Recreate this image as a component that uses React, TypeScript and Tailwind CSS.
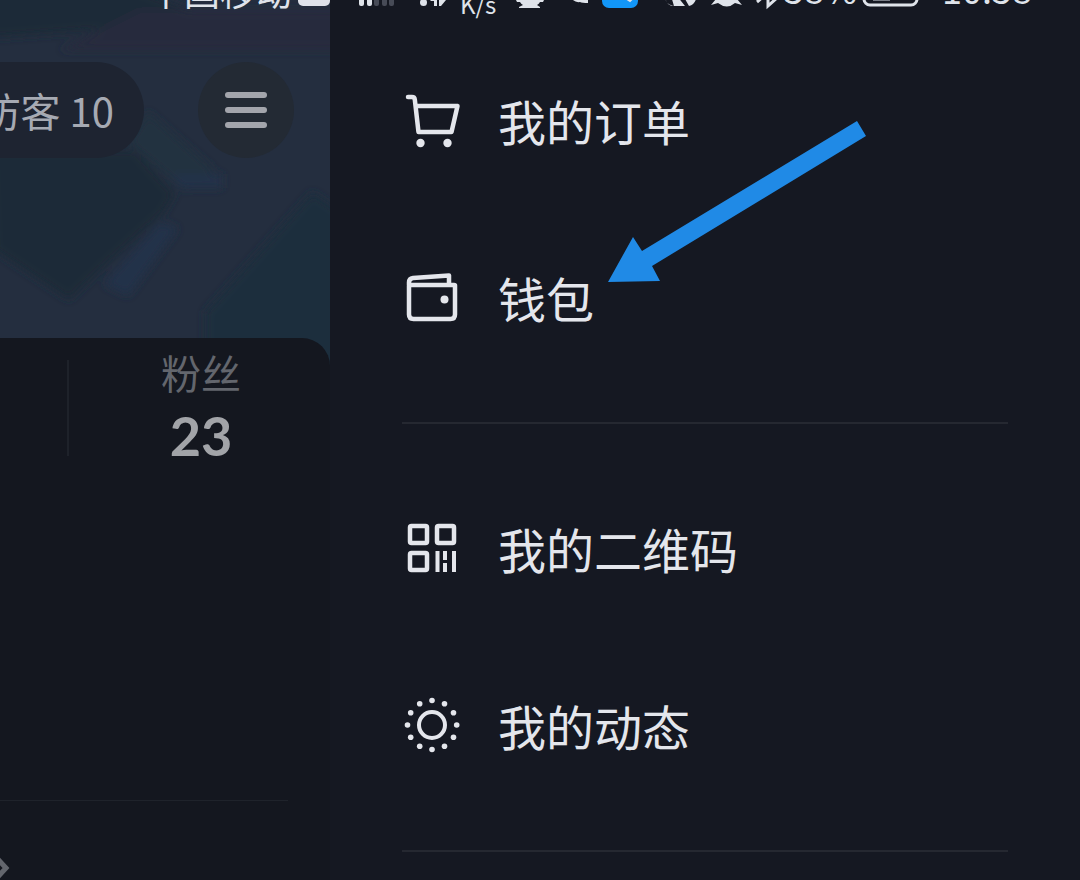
import type { ReactNode } from 'react';

const menuGroups: { id: string; label: string; icon: ReactNode }[][] = [
  [
    { id: 'orders', label: '我的订单', icon: <CartIcon /> },
    { id: 'wallet', label: '钱包', icon: <WalletIcon /> },
  ],
  [
    { id: 'qrcode', label: '我的二维码', icon: <QrIcon /> },
    { id: 'moments', label: '我的动态', icon: <MomentsIcon /> },
  ],
];

function CartIcon() {
  return (
    <svg viewBox="0 0 60 60" className="w-full" fill="none" stroke="currentColor" strokeWidth="4.500" strokeLinecap="round" strokeLinejoin="round">
      <path d="M6 7h4q2.500 0 2.800 2.500L16.500 42h33L55.500 16H14" />
      <circle cx="18.500" cy="53" r="4.200" fill="currentColor" stroke="none" />
      <circle cx="45.500" cy="53" r="4.200" fill="currentColor" stroke="none" />
    </svg>
  );
}

function WalletIcon() {
  return (
    <svg viewBox="0 0 60 60" className="w-full" fill="none" stroke="currentColor" strokeWidth="4.500" strokeLinejoin="round">
      <path d="M7 18.500v29q0 4.500 4.500 4.500h37q4.500 0 4.500-4.500v-29q0-0.500-1-0.500H7v-2.500q0-4 4-4.500l36-2.500v9.500" />
      <circle cx="42.500" cy="32.500" r="4" fill="currentColor" stroke="none" />
    </svg>
  );
}

function QrIcon() {
  return (
    <svg viewBox="0 0 60 60" className="w-full" fill="none" stroke="currentColor" strokeWidth="4.500">
      <rect x="8" y="8" width="17" height="17" rx="1.500" />
      <rect x="35" y="8" width="17" height="17" rx="1.500" />
      <rect x="8" y="35" width="17" height="17" rx="1.500" />
      <path d="M35.500 33v21M43 33v9M43 45v9M52 33v21" strokeWidth="4" />
    </svg>
  );
}

function MomentsIcon() {
  return (
    <svg viewBox="0 0 60 60" className="w-full" fill="currentColor">
      <circle cx="30" cy="30" r="13" fill="none" stroke="currentColor" strokeWidth="4" />
      <circle cx="30" cy="5.500" r="2.800" />
      <circle cx="42.500" cy="8.700" r="2.800" />
      <circle cx="51.500" cy="17.700" r="2.800" />
      <circle cx="54.700" cy="30" r="2.800" />
      <circle cx="51.500" cy="42.300" r="2.800" />
      <circle cx="42.500" cy="51.300" r="2.800" />
      <circle cx="30" cy="54.500" r="2.800" />
      <circle cx="17.700" cy="51.300" r="2.800" />
      <circle cx="8.700" cy="42.300" r="2.800" />
      <circle cx="5.500" cy="30" r="2.800" />
      <circle cx="8.700" cy="17.700" r="2.800" />
      <circle cx="17.700" cy="8.700" r="2.800" />
    </svg>
  );
}

function StatusBar() {
  return (
    <div className="absolute inset-x-0 -top-10 z-10 flex h-14 items-center pl-[148px] text-[#dfe3ea]">
      <span className="pt-1 text-4xl">中国移动</span>

      {/* HD badge, signal, wifi */}
      <svg viewBox="292 -40 168 56" className="h-14 w-[168px] shrink-0" fill="currentColor">
        <rect x="298" y="-20" width="32" height="26" rx="5" />
        <rect x="359" y="-8" width="5" height="14" rx="2" />
        <rect x="367" y="-14" width="5" height="20" rx="2" />
        <g fill="#474b57">
          <rect x="374" y="-18" width="5" height="24" rx="2" />
          <rect x="382" y="-20" width="5" height="26" rx="2" />
          <rect x="389" y="-22" width="5" height="28" rx="2" />
        </g>
        <circle cx="423.500" cy="2.500" r="3.500" />
        <path d="m430 1 4-4h3v9h-3V1zM439-6h3V0h4l-5 6h-2z" />
      </svg>

      <span className="w-10 self-end text-2xl leading-6">K/s</span>

      {/* notifications, nfc, bell, bluetooth */}
      <svg viewBox="500 -40 284 56" className="h-14 w-[284px] shrink-0" fill="currentColor">
        <path d="M515-2h5v-14h20V-2h5l-2 4h-3q-1 2-3 3l3 2v1h-21V7l4-2q-2-1-3-3h-3z" />
        <path d="M571-2a9 9 0 1 1 17-1v6q-6 0-8-1-5 1-9-4z" />
        <rect x="602" y="-20" width="36" height="28" rx="7" fill="#1296f8" />
        <path d="m627-1 3 2 3-3" fill="none" stroke="currentColor" strokeWidth="2" />
        <path d="M665-4q1 10 9 10l-3-10h6l8 10h-8q-12 0-12-10zM681-8l8 14q8-2 8-14z" />
        <path d="M716-16h21V-1l5 6-7-2q-8 7-17 0l-7 2 5-6z" />
        <path d="m757 2 7-6m4-14V6l10-9-11-9" fill="none" stroke="currentColor" strokeWidth="3" />
      </svg>

      <span className="w-[78px] text-4xl">58%</span>

      {/* battery */}
      <svg viewBox="862 -40 60 56" className="h-14 w-15 shrink-0" fill="none" stroke="currentColor">
        <rect x="864" y="-18" width="53" height="23" rx="6" strokeWidth="3" />
        <path d="M873-1h17" strokeWidth="3" />
      </svg>

      <span className="ml-5 text-4xl">10:58</span>
    </div>
  );
}

function CoverArt() {
  return (
    <svg viewBox="0 0 330 380" preserveAspectRatio="none" aria-hidden="true" className="absolute inset-x-0 top-0 h-[380px] w-full">
      <defs>
        <filter id="soft" x="-10%" y="-10%" width="120%" height="120%">
          <feGaussianBlur stdDeviation="4" />
        </filter>
      </defs>
      <rect width="330" height="380" fill="#242e3f" />
      <g filter="url(#soft)">
        <path d="M-10-10h150l50 20-90 20L-10 38z" fill="#1f2c38" />
        <path d="M140 10h200v40H60z" fill="#262c3c" />
        <path d="M128 142l20-30 66 58-30 20z" fill="#22323f" />
        <path d="M170 174h52v14h-40z" fill="#22304a" />
        <path d="M-10 150h145l40 44-12 20-60 54-34 32-75-50z" fill="#1f2c38" />
        <path d="M160 222l18 6-50 68-24-12z" fill="#22304a" />
        <path d="M312 192l30 20v180H205v-80z" fill="#1f2d3c" />
      </g>
    </svg>
  );
}

function Profile() {
  return (
    <main className="relative flex w-[330px] shrink-0 flex-col overflow-hidden">
      <CoverArt />
      <header className="relative flex h-[338px] items-start justify-between pt-[62px] pr-9">
        <button className="flex h-24 w-36 items-center justify-end rounded-r-full bg-[#1e2431] pr-[30px] text-[40px] whitespace-nowrap text-[#a6aab3]">
          访客 10
        </button>
        <button aria-label="菜单" className="flex size-24 flex-col items-center justify-center gap-[9px] rounded-full bg-[#232a34]">
          <span className="h-1.5 w-[42px] rounded-full bg-[#a3a5ac]" />
          <span className="h-1.5 w-[42px] rounded-full bg-[#a3a5ac]" />
          <span className="h-1.5 w-[42px] rounded-full bg-[#a3a5ac]" />
        </button>
      </header>

      <section className="relative flex flex-1 flex-col rounded-tr-[28px] bg-[#14171f] pt-[22px]">
        <div className="ml-[67px] flex h-24 w-[266px] flex-col items-center justify-between border-l-2 border-[#1e222a]">
          <span className="text-[40px] leading-6 text-[#63666d]">粉丝</span>
          <span className="font-[Lato] text-[54px] leading-10 font-bold text-[#a2a4a8]">23</span>
        </div>
        <hr className="mt-[344px] mr-[42px] border-[#1f232b]" />
        <svg viewBox="0 0 12 24" className="mt-[55px] h-6 w-3" fill="none" stroke="#63666d" strokeWidth="5">
          <path d="M-5 0 6 12-5 24" />
        </svg>
      </section>
    </main>
  );
}

export default function App() {
  return (
    <div className="relative flex min-h-screen overflow-hidden bg-[#151822] font-['Noto_Sans_CJK_SC',sans-serif]">
      <StatusBar />
      <Profile />

      <nav className="relative flex-1 px-18 pt-8">
        {menuGroups.map((group, i) => (
          <ul key={i} className="border-b-2 border-[#252831] py-9 first:pt-0">
            {group.map((item) => (
              <li key={item.id}>
                <button className="flex h-[177px] w-full items-center gap-9 pb-0.5 text-left text-5xl text-[#e4e6ec]">
                  <span className="w-15 shrink-0">{item.icon}</span>
                  {item.label}
                </button>
              </li>
            ))}
          </ul>
        ))}

        {/* Arrow pointing at the wallet entry */}
        <svg viewBox="0 0 258 161" aria-hidden="true" className="pointer-events-none absolute top-[121px] left-[278px] w-[258px]">
          <path d="M0 161 25 116l9 14L249 0l9 15L44 145l8 15z" fill="#208ae6" />
        </svg>
      </nav>
    </div>
  );
}
